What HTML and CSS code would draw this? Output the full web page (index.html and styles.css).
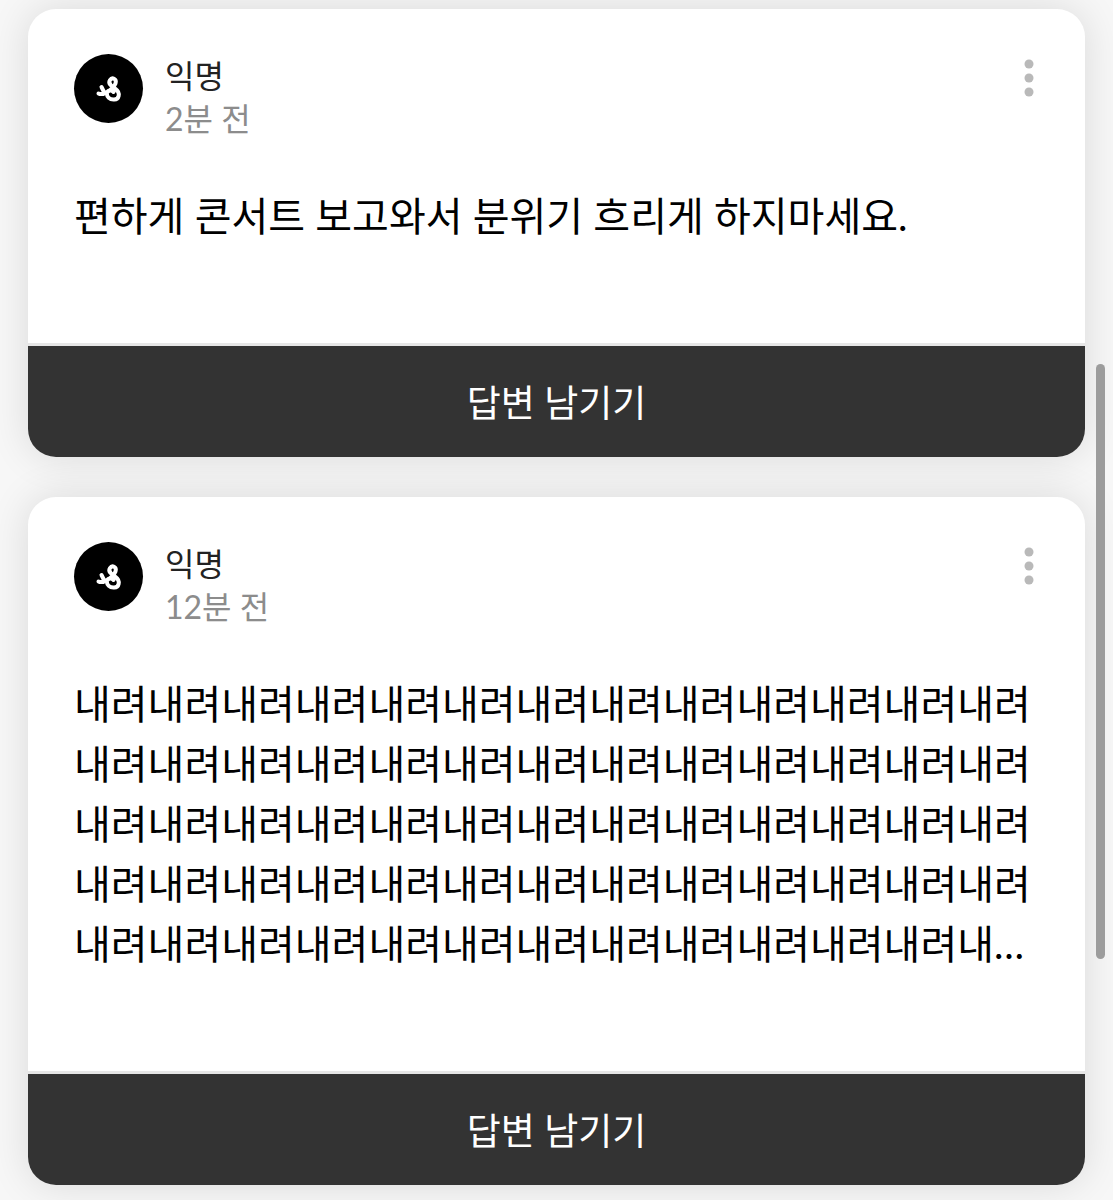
FILE: index.html
```html
<!DOCTYPE html>
<html lang="ko">
<head>
    <meta charset="UTF-8">
    <meta name="viewport" content="width=device-width, initial-scale=1">
    <title>익명 질문</title>
    <link rel="stylesheet" href="styles.css">
</head>
<body>
    <!-- shared icons -->
    <svg class="icon-defs" aria-hidden="true">
        <symbol id="logo" viewBox="0 0 32 32">
            <path d="M5.500 20.500C10 23 20 16.500 22.500 10.500C24 5.500 19 4 17 7C14.500 11 19 13.500 22.500 16C28 20 26 27 20.500 26.500C16.500 26.500 14 24 13.800 20.500C14.500 17 18.500 16.500 20.500 19M8.500 14L11 19"/>
        </symbol>
        <symbol id="dots" viewBox="0 0 10 40">
            <circle cx="5" cy="6" r="4.500"/>
            <circle cx="5" cy="20" r="4.500"/>
            <circle cx="5" cy="34" r="4.500"/>
        </symbol>
    </svg>

    <main class="list">
        <article class="card">
            <header class="card-header">
                <div class="avatar"><svg><use href="#logo"/></svg></div>
                <div class="writer">
                    <div class="name">익명</div>
                    <div class="time">2분 전</div>
                </div>
                <button class="more" type="button" aria-label="더보기"><svg><use href="#dots"/></svg></button>
            </header>
            <p class="content">편하게 콘서트 보고와서 분위기 흐리게 하지마세요.</p>
            <button class="reply" type="button">답변 남기기</button>
        </article>

        <article class="card">
            <header class="card-header">
                <div class="avatar"><svg><use href="#logo"/></svg></div>
                <div class="writer">
                    <div class="name">익명</div>
                    <div class="time">12분 전</div>
                </div>
                <button class="more" type="button" aria-label="더보기"><svg><use href="#dots"/></svg></button>
            </header>
            <p class="content">내려내려내려내려내려내려내려내려내려내려내려내려내려내려내려내려내려내려내려내려내려내려내려내려내려내려내려내려내려내려내려내려내려내려내려내려내려내려내려내려내려내려내려내려내려내려내려내려내려내려내려내려내려내려내려내려내려내려내려내려내려내려내려내려내…</p>
            <button class="reply" type="button">답변 남기기</button>
        </article>
    </main>

    <div class="scroll-thumb"></div>
</body>
</html>
```
FILE: styles.css
```css
* {
    box-sizing: border-box;
}

body {
    margin: 0;
    background: #f7f7f7;
    font-family: Lato, "Noto Sans CJK KR", sans-serif;
    color: #000;
}

button {
    border: 0;
    padding: 0;
    background: none;
    font-family: inherit;
    cursor: pointer;
}

.icon-defs {
    display: none;
}

.list {
    display: flex;
    flex-direction: column;
    gap: 40px;
    padding: 9px 28px 15px;
}

.card {
    background: #fff;
    border-radius: 28px;
    box-shadow: 0 0 40px rgba(0, 0, 0, 0.12);
    overflow: hidden;
}

.card-header {
    display: flex;
    align-items: flex-start;
    gap: 22px;
    padding: 45px 46px 0;
}

.avatar {
    width: 69px;
    height: 69px;
    border-radius: 50%;
    background: #000;
    display: flex;
    align-items: center;
    justify-content: center;
}

.avatar svg {
    width: 32px;
    height: 32px;
    fill: none;
    stroke: #fff;
    stroke-width: 4;
    stroke-linecap: round;
    stroke-linejoin: round;
}

.writer {
    flex: 1;
    font-size: 32px;
    line-height: 43px;
}

.name {
    color: #222;
}

.time {
    color: #8c8c8c;
}

.more {
    width: 20px;
    height: 48px;
}

.more svg {
    display: block;
    width: 10px;
    height: 40px;
    margin: 0 auto;
    fill: #b9b9b9;
}

.content {
    margin: 46px 46px 97px;
    font-size: 40px;
    line-height: 60px;
    word-break: break-all;
}

.reply {
    display: block;
    width: 100%;
    height: 114px;
    padding-bottom: 2px;
    border-top: 3px solid #e6e6e6;
    background: #333;
    color: #fff;
    font-size: 37px;
}

/* scroll indicator over the page edge */
.scroll-thumb {
    position: fixed;
    top: 364px;
    right: 8px;
    width: 9px;
    height: 595px;
    border-radius: 5px;
    background: #9c9c9c;
}
```
